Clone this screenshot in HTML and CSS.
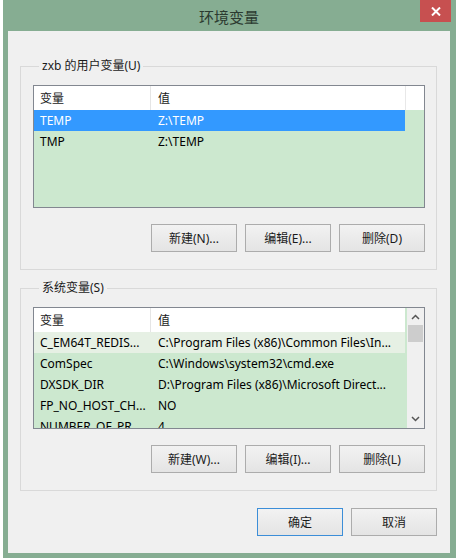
FILE: index.html
```html
<!DOCTYPE html>
<html lang="zh-CN">
<head>
  <meta charset="UTF-8">
  <title>环境变量</title>
  <link rel="stylesheet" href="styles.css">
</head>
<body>

<!-- ダイアログ -->
<div class="window">
  <div class="titlebar">
    <span class="title">环境变量</span>
    <span class="close">
      <svg width="10" height="9" viewBox="0 0 10 9"><path d="M1 0.5 L9 8.5 M9 0.5 L1 8.5" stroke="#fff" stroke-width="2"/></svg>
    </span>
  </div>

  <div class="content">
    <!-- ユーザー変数 -->
    <fieldset class="group">
      <legend>zxb 的用户变量(U)</legend>
      <div class="list list-user">
        <div class="list-body">
          <div class="row head"><span class="c1">变量</span><span class="c2">值</span></div>
          <div class="row selected"><span class="c1">TEMP</span><span class="c2">Z:\TEMP</span></div>
          <div class="row"><span class="c1">TMP</span><span class="c2">Z:\TEMP</span></div>
        </div>
      </div>
      <div class="buttons">
        <button class="btn">新建(N)...</button>
        <button class="btn">编辑(E)...</button>
        <button class="btn">删除(D)</button>
      </div>
    </fieldset>

    <!-- システム変数 -->
    <fieldset class="group">
      <legend>系统变量(S)</legend>
      <div class="list list-system">
        <div class="list-body">
          <div class="row head"><span class="c1">变量</span><span class="c2">值</span></div>
          <div class="row hover"><span class="c1">C_EM64T_REDIS...</span><span class="c2">C:\Program Files (x86)\Common Files\In...</span></div>
          <div class="row"><span class="c1">ComSpec</span><span class="c2">C:\Windows\system32\cmd.exe</span></div>
          <div class="row"><span class="c1">DXSDK_DIR</span><span class="c2">D:\Program Files (x86)\Microsoft Direct...</span></div>
          <div class="row"><span class="c1">FP_NO_HOST_CH...</span><span class="c2">NO</span></div>
          <div class="row"><span class="c1">NUMBER_OF_PR...</span><span class="c2">4</span></div>
        </div>
        <div class="scrollbar">
          <svg class="arrow" width="9" height="6" viewBox="0 0 9 6"><path d="M1 5 L4.5 1.5 L8 5" fill="none" stroke="#555" stroke-width="1.5"/></svg>
          <div class="thumb"></div>
          <div class="track"></div>
          <svg class="arrow" width="9" height="6" viewBox="0 0 9 6"><path d="M1 1 L4.5 4.5 L8 1" fill="none" stroke="#555" stroke-width="1.5"/></svg>
        </div>
      </div>
      <div class="buttons">
        <button class="btn">新建(W)...</button>
        <button class="btn">编辑(I)...</button>
        <button class="btn">删除(L)</button>
      </div>
    </fieldset>

    <div class="footer">
      <button class="btn default">确定</button>
      <button class="btn">取消</button>
    </div>
  </div>
</div>

</body>
</html>
```

FILE: styles.css
```css
* {
  margin: 0;
  padding: 0;
  box-sizing: border-box;
}

body {
  font-family: 'Noto Sans', 'Noto Sans CJK SC', sans-serif;
  font-size: 12px;
  color: #000;
  background: #fff;
  padding-left: 3px;
}

/* ウィンドウ枠 */
.window {
  width: 453px;
  height: 558px;
  background: #86ad92;
  padding: 0 6px 5px 5px;
  display: flex;
  flex-direction: column;
}

.titlebar {
  height: 31px;
  position: relative;
  display: flex;
  justify-content: center;
  align-items: center;
}

.title {
  font-size: 15px;
  color: #2b3a30;
  margin-top: 1px;
}

.close {
  position: absolute;
  top: 0;
  right: -1px;
  width: 31px;
  height: 22px;
  background: #c75050;
  display: flex;
  justify-content: center;
  align-items: center;
}

.content {
  flex: 1;
  background: #f0f0f0;
  padding: 27px 13px 16px 12px;
}

/* グループボックス */
.group {
  border: 1px solid #d9d9d9;
  padding: 11px 11px 17px 12px;
  margin-bottom: 10px;
}

.group legend {
  margin-left: 6px;
  padding: 0 3px;
  line-height: 16px;
  color: #1a1a1a;
}

/* リスト */
.list {
  display: flex;
  border: 1px solid #828790;
  background: #cce8cf;
  overflow: hidden;
}

.list-user {
  height: 123px;
}

.list-system {
  height: 122px;
}

.list-body {
  flex: 1;
}

.row {
  display: flex;
  height: 21px;
  align-items: center;
  width: 371px;
  white-space: nowrap;
}

.row.head {
  height: 24px;
  background: #fff;
  color: #1a1a1a;
}

.list-user .row.head {
  width: auto;
  background: linear-gradient(to right, #fff 371px, #e8e8e8 371px, #e8e8e8 372px, #fff 372px);
}

.row.selected {
  background: #3399ff;
  color: #fff;
}

.row.hover {
  background: #e6f0e4;
}

.c1 {
  width: 117px;
  padding-left: 6px;
  overflow: hidden;
}

.c2 {
  flex: 1;
  padding-left: 7px;
  overflow: hidden;
}

.head .c1 {
  border-right: 1px solid #e5e5e5;
  height: 100%;
  display: flex;
  align-items: center;
}

/* スクロールバー */
.scrollbar {
  width: 17px;
  background: #f0f0f0;
  display: flex;
  flex-direction: column;
  align-items: center;
  margin-left: 1px;
}

.scrollbar .arrow {
  margin: 6px 0;
}

.thumb {
  width: 15px;
  height: 17px;
  background: #cdcdcd;
  margin-top: -1px;
}

.track {
  flex: 1;
}

/* ボタン */
.buttons {
  display: flex;
  justify-content: flex-end;
  gap: 8px;
  margin-top: 16px;
}

.btn {
  width: 86px;
  height: 28px;
  font-family: inherit;
  font-size: 12px;
  color: #1a1a1a;
  border: 1px solid #acacac;
  background: linear-gradient(#f2f2f2, #e4e4e4);
}

.btn.default {
  border-color: #3c8ed8;
}

.footer {
  display: flex;
  justify-content: flex-end;
  gap: 8px;
  margin-top: 17px;
}
```
